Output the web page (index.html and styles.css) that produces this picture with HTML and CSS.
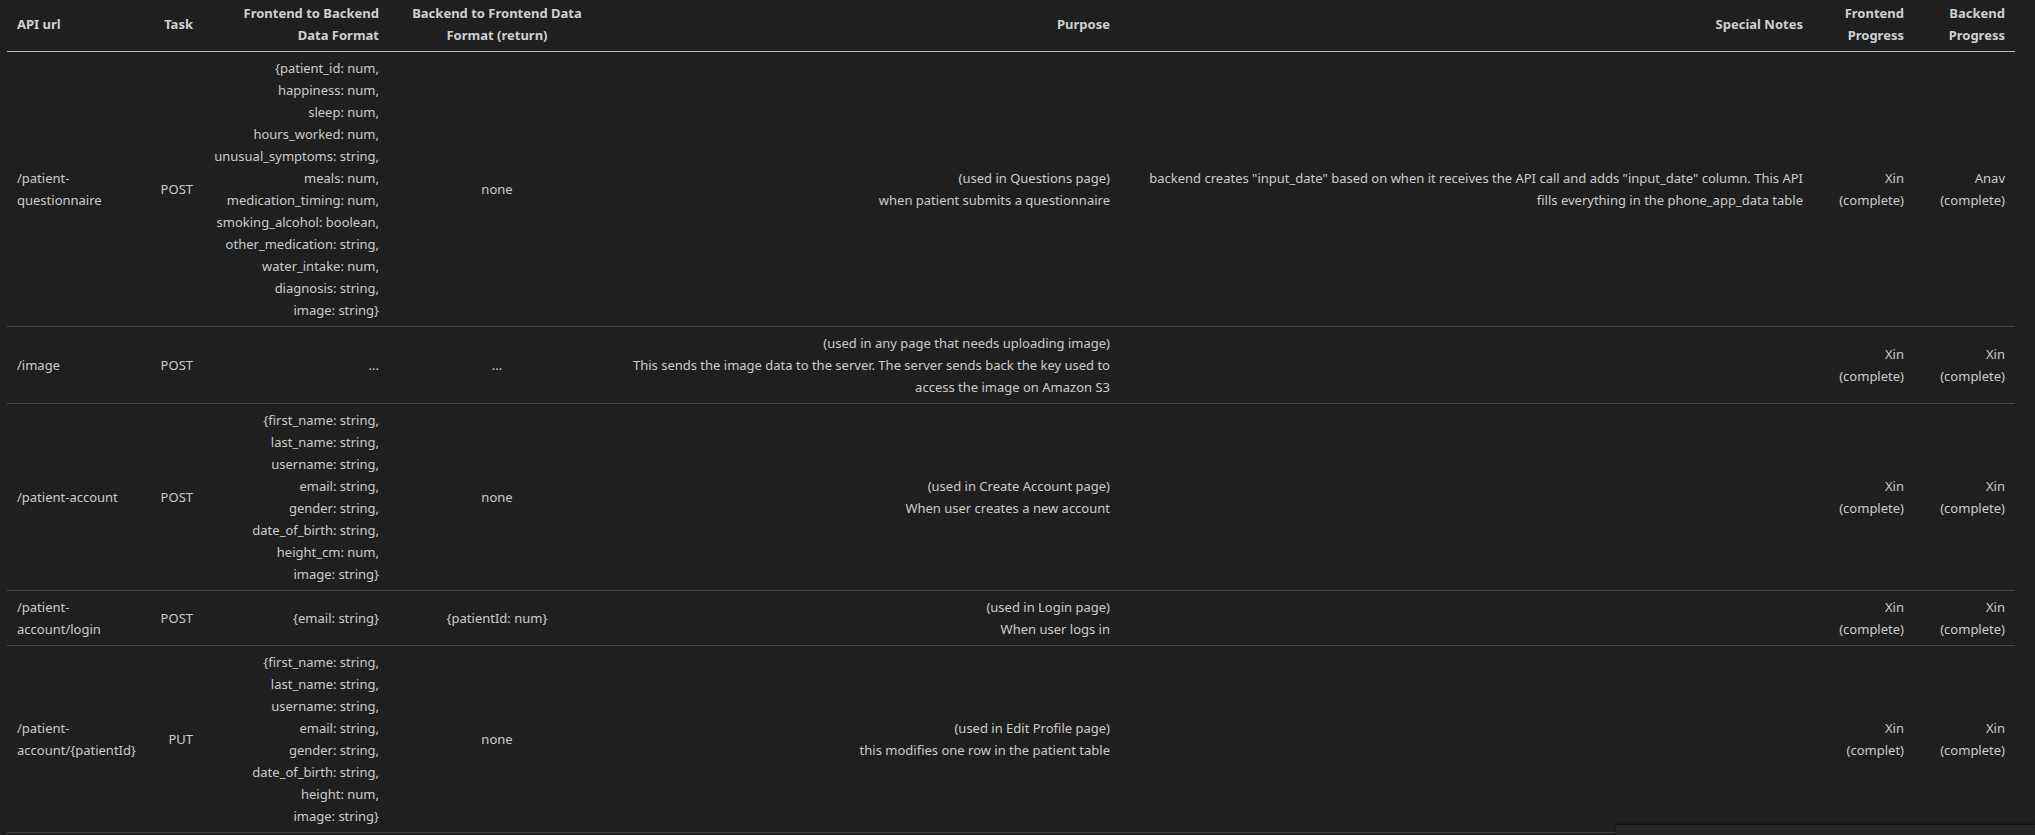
FILE: index.html
```html
<!DOCTYPE html>
<html lang="en">
<head>
<meta charset="utf-8">
<title>API table</title>
<link rel="stylesheet" href="styles.css">
</head>
<body>
<div class="preview">
<table class="api-table">
  <colgroup>
    <col class="c-url">
    <col class="c-task">
    <col class="c-f2b">
    <col class="c-b2f">
    <col class="c-purpose">
    <col class="c-notes">
    <col class="c-prog">
    <col class="c-prog">
  </colgroup>
  <thead>
    <tr>
      <th class="left">API url</th>
      <th class="right">Task</th>
      <th class="right">Frontend to Backend Data Format</th>
      <th class="center">Backend to Frontend Data Format (return)</th>
      <th class="right">Purpose</th>
      <th class="right">Special Notes</th>
      <th class="right">Frontend Progress</th>
      <th class="right">Backend Progress</th>
    </tr>
  </thead>
  <tbody>
    <tr>
      <td class="left">/patient-questionnaire</td>
      <td class="right">POST</td>
      <td class="right fmt">{patient_id: num,<br>happiness: num,<br>sleep: num,<br>hours_worked: num,<br>unusual_symptoms: string,<br>meals: num,<br>medication_timing: num,<br>smoking_alcohol: boolean,<br>other_medication: string,<br>water_intake: num,<br>diagnosis: string,<br>image: string}</td>
      <td class="center">none</td>
      <td class="right">(used in Questions page)<br>when patient submits a questionnaire</td>
      <td class="right">backend creates "input_date" based on when it receives the API call and adds "input_date" column. This API<br>fills everything in the phone_app_data table</td>
      <td class="right">Xin<br>(complete)</td>
      <td class="right">Anav<br>(complete)</td>
    </tr>
    <tr>
      <td class="left">/image</td>
      <td class="right">POST</td>
      <td class="right fmt">...</td>
      <td class="center">...</td>
      <td class="right">(used in any page that needs uploading image)<br>This sends the image data to the server. The server sends back the key used to<br>access the image on Amazon S3</td>
      <td class="right"></td>
      <td class="right">Xin<br>(complete)</td>
      <td class="right">Xin<br>(complete)</td>
    </tr>
    <tr>
      <td class="left">/patient-account</td>
      <td class="right">POST</td>
      <td class="right fmt">{first_name: string,<br>last_name: string,<br>username: string,<br>email: string,<br>gender: string,<br>date_of_birth: string,<br>height_cm: num,<br>image: string}</td>
      <td class="center">none</td>
      <td class="right">(used in Create Account page)<br>When user creates a new account</td>
      <td class="right"></td>
      <td class="right">Xin<br>(complete)</td>
      <td class="right">Xin<br>(complete)</td>
    </tr>
    <tr>
      <td class="left">/patient-<br>account/login</td>
      <td class="right">POST</td>
      <td class="right fmt">{email: string}</td>
      <td class="center">{patientId: num}</td>
      <td class="right">(used in Login page)<br>When user logs in</td>
      <td class="right"></td>
      <td class="right">Xin<br>(complete)</td>
      <td class="right">Xin<br>(complete)</td>
    </tr>
    <tr>
      <td class="left">/patient-<br>account/{patientId}</td>
      <td class="right">PUT</td>
      <td class="right fmt">{first_name: string,<br>last_name: string,<br>username: string,<br>email: string,<br>gender: string,<br>date_of_birth: string,<br>height: num,<br>image: string}</td>
      <td class="center">none</td>
      <td class="right">(used in Edit Profile page)<br>this modifies one row in the patient table</td>
      <td class="right"></td>
      <td class="right">Xin<br>(complet)</td>
      <td class="right">Xin<br>(complete)</td>
    </tr>
  </tbody>
</table>
</div>
<div class="scroll-thumb"></div>
</body>
</html>
```

FILE: styles.css
```css
html, body {
  margin: 0;
  padding: 0;
  background: #1f1f1f;
  overflow: hidden;
}

body {
  color: #cccccc;
  font-family: "Noto Sans", "Open Sans", sans-serif;
  font-size: 13px;
  line-height: 22px;
  height: 835px;
  position: relative;
}

.preview {
  padding-left: 7px;
}

.api-table {
  border-collapse: collapse;
  table-layout: fixed;
  width: 2008px;
  margin-top: -3px;
}

.c-url { width: 141px; }
.c-task { width: 55px; }
.c-f2b { width: 186px; }
.c-b2f { width: 216px; }
.c-purpose { width: 515px; }
.c-notes { width: 693px; }
.c-prog { width: 101px; }

.api-table th,
.api-table td {
  padding: 5px 10px;
  vertical-align: middle;
}

.api-table th {
  font-weight: 700;
  color: #d0d0d0;
  border-bottom: 1px solid rgba(255, 255, 255, 0.69);
}

.api-table tbody tr + tr td {
  border-top: 1px solid rgba(255, 255, 255, 0.18);
}

.api-table tbody tr:last-child td {
  border-bottom: 1px solid rgba(255, 255, 255, 0.18);
}

.fmt { white-space: nowrap; }

.left { text-align: left; }
.right { text-align: right; }
.center { text-align: center; }

.scroll-thumb {
  position: absolute;
  left: 1616px;
  top: 825px;
  width: 419px;
  height: 10px;
  background: #252527;
  box-shadow: 0 -1px 2px rgba(0, 0, 0, 0.6);
}
```
